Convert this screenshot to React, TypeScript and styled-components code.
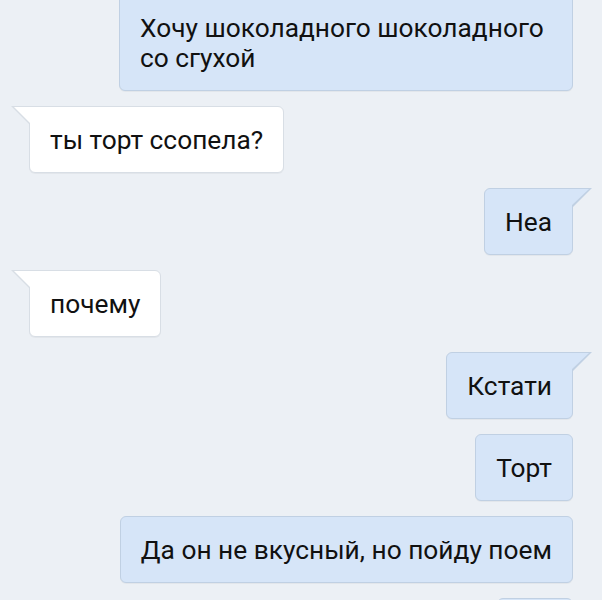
import React from "react";
import styled, { createGlobalStyle, css } from "styled-components";

const GlobalStyle = createGlobalStyle`
  html, body {
    margin: 0;
    padding: 0;
    background: #ecf0f5;
  }

  body {
    font-family: Roboto, "Liberation Sans", Arial, sans-serif;
    overflow: hidden;
  }
`;

const ChatLayout = styled.div`
  width: 602px;
  height: 600px;
  overflow: hidden;
  background: #ecf0f5;
`;

const MessageList = styled.div`
  display: flex;
  flex-direction: column;
  gap: 15px;
  padding: 0 29px 0 29px;
  margin-top: -6px;
`;

const outgoingTail = css`
  &::before {
    content: "";
    position: absolute;
    top: -1px;
    right: -20px;
    width: 20px;
    height: 20px;
    background: #c0d0e3;
    clip-path: polygon(0 0, 100% 0, 0 100%);
  }

  &::after {
    content: "";
    position: absolute;
    top: 0;
    right: -17px;
    width: 18px;
    height: 17px;
    background: #d6e5f8;
    clip-path: polygon(0 0, 100% 0, 0 100%);
  }
`;

const incomingTail = css`
  &::before {
    content: "";
    position: absolute;
    top: -1px;
    left: -19px;
    width: 19px;
    height: 19px;
    background: #d8dee5;
    clip-path: polygon(0 0, 100% 0, 100% 100%);
  }

  &::after {
    content: "";
    position: absolute;
    top: 0;
    left: -16px;
    width: 17px;
    height: 17px;
    background: #ffffff;
    clip-path: polygon(0 0, 100% 0, 100% 100%);
  }
`;

const Bubble = styled.div<{ $out?: boolean; $tail?: boolean }>`
  position: relative;
  box-sizing: border-box;
  max-width: 454px;
  padding: 17.5px 20px;
  align-self: ${(props) => (props.$out ? "flex-end" : "flex-start")};
  background: ${(props) => (props.$out ? "#d6e5f8" : "#ffffff")};
  border: 1px solid ${(props) => (props.$out ? "#c0d0e3" : "#d8dee5")};
  border-radius: 6px;
  box-shadow: 0 1px 0 rgba(0, 0, 0, 0.04);
  color: #111111;

  font-size: 26.3px;
  line-height: 30px;

  ${(props) =>
    props.$tail &&
    css`
      ${props.$out ? "border-top-right-radius: 0;" : "border-top-left-radius: 0;"}
      ${props.$out ? outgoingTail : incomingTail}
    `}
`;

const messages = [
  { out: true, tail: false, text: "Хочу шоколадного шоколадного со сгухой" },
  { out: false, tail: true, text: "ты торт ссопела?" },
  { out: true, tail: true, text: "Неа" },
  { out: false, tail: true, text: "почему" },
  { out: true, tail: true, text: "Кстати" },
  { out: true, tail: false, text: "Торт" },
  { out: true, tail: false, text: "Да он не вкусный, но пойду поем" },
  { out: true, tail: false, text: "Да" },
];

export default function App() {
  return (
    <ChatLayout>
      <GlobalStyle />
      <MessageList>
        {messages.map((m, i) => (
          <Bubble key={i} $out={m.out} $tail={m.tail}>
            {m.text}
          </Bubble>
        ))}
      </MessageList>
    </ChatLayout>
  );
}
